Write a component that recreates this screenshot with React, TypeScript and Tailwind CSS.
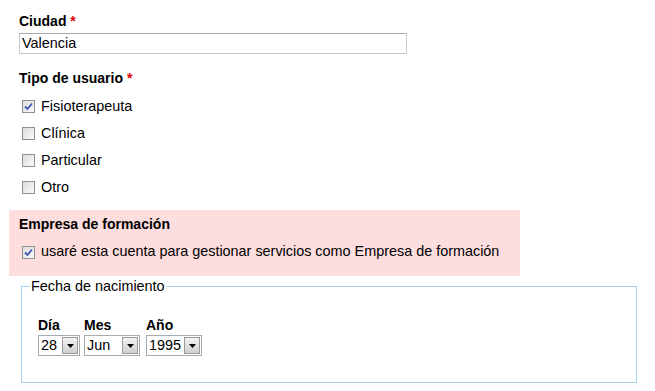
import React from "react";

const Check = ({ checked }: { checked?: boolean }) => (
  <span className="relative inline-flex h-[13px] w-[13px] shrink-0 items-center justify-center border border-[#8e8f8f] bg-gradient-to-br from-[#dcdcdc] to-[#fbfbfb]">
    {checked && (
      <svg width="9" height="9" viewBox="0 0 9 9">
        <path d="M1 4.5 L3.5 7 L8 1.5" fill="none" stroke="#4254b8" strokeWidth="1.8" />
      </svg>
    )}
  </span>
);

const Option = ({ label, checked }: { label: string; checked?: boolean }) => (
  <label className="flex h-[27px] items-center gap-[6px] pl-[3px]">
    <Check checked={checked} />
    <span>{label}</span>
  </label>
);

const Select = ({ value, width }: { value: string; width: string }) => (
  <div className={`mt-[2px] flex h-[21px] items-center border border-[#a5acb2] bg-white ${width}`}>
    <span className="flex-1 pl-[2px] leading-none">{value}</span>
    <span className="mr-[1px] flex h-[17px] w-[16px] items-center justify-center border border-[#9a9a9a] bg-gradient-to-b from-[#f4f4f4] to-[#cfcfcf]">
      <svg width="7" height="4" viewBox="0 0 7 4">
        <path d="M0 0 H7 L3.5 4 Z" fill="#000" />
      </svg>
    </span>
  </div>
);

export default function App() {
  return (
    <div className="h-[391px] w-[655px] overflow-hidden bg-white text-[14.4px] text-black" style={{ fontFamily: '"Liberation Sans", Arial, sans-serif' }}>
      <div className="pl-[19px] pt-[13px]">
        <div className="text-[14px] font-bold leading-[16px]">
          Ciudad <span className="text-[#e00000]">*</span>
        </div>
        <div className="mt-[4px] flex h-[21px] w-[388px] items-center border border-[#c8c8c8] border-t-[#a9a9a9] pl-[2px]">
          Valencia
        </div>
        <div className="mt-[16px] text-[14px] font-bold leading-[16px]">
          Tipo de usuario <span className="text-[#e00000]">*</span>
        </div>
        <div className="mt-[7px]">
          <Option label="Fisioterapeuta" checked />
          <Option label="Clínica" />
          <Option label="Particular" />
          <Option label="Otro" />
        </div>
      </div>

      <div className="ml-[9px] mt-[9px] h-[66px] w-[511px] bg-[#fddddd] pl-[10px] pt-[6px]">
        <div className="text-[14px] font-bold leading-[16px]">Empresa de formación</div>
        <div className="mt-[8px] flex h-[24px] items-center gap-[6px] pl-[3px]">
          <Check checked />
          <span>usaré esta cuenta para gestionar servicios como Empresa de formación</span>
        </div>
      </div>

      <fieldset className="ml-[21px] mt-[2px] h-[105px] w-[616px] border border-[#a6d2ec] pl-[8px] pr-[16px] pb-0 pt-0">
        <legend className="px-[1px] leading-[16px]">Fecha de nacimiento</legend>
        <div className="ml-[8px] mt-[23px] flex gap-[4px]">
          <div className="flex flex-col">
            <span className="text-[14px] font-bold leading-[16px]">Día</span>
            <Select value="28" width="w-[42px]" />
          </div>
          <div className="flex flex-col">
            <span className="text-[14px] font-bold leading-[16px]">Mes</span>
            <Select value="Jun" width="w-[56px]" />
          </div>
          <div className="ml-[2px] flex flex-col">
            <span className="text-[14px] font-bold leading-[16px]">Año</span>
            <Select value="1995" width="w-[56px]" />
          </div>
        </div>
      </fieldset>
    </div>
  );
}
